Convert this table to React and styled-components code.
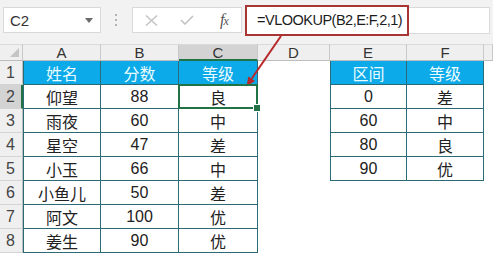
import React from "react";
import styled, { createGlobalStyle } from "styled-components";

const GlobalStyle = createGlobalStyle`
  html, body {
    margin: 0;
    padding: 0;
    background: #ffffff;
    overflow: hidden;
  }
  * {
    box-sizing: border-box;
  }
`;

const FONT = `"Liberation Sans", "Noto Sans CJK SC", sans-serif`;
const TEAL = "#2b6b78";
const EXCEL_GREEN = "#217346";

const Sheet = styled.div`
  position: relative;
  width: 493px;
  height: 255px;
  font-family: ${FONT};
  background: #ffffff;
`;

/* ---------- formula bar ---------- */

const Toolbar = styled.div`
  height: 44px;
  padding: 0 0 4px 3px;
  display: flex;
  align-items: center;
  background: #f2f2f2;
`;

const NameBox = styled.div`
  width: 98px;
  height: 26px;
  display: flex;
  align-items: center;
  justify-content: space-between;
  padding: 0 7px 0 6px;
  background: #fff;
  border: 1px solid #d9d9d9;
  font-size: 15px;
  color: #333;
`;

const Caret = styled.span`
  width: 0;
  height: 0;
  border-left: 4px solid transparent;
  border-right: 4px solid transparent;
  border-top: 5px solid #6a6a6a;
`;

const Grip = styled.div`
  width: 3px;
  margin: 0 14px 0 14px;
  display: flex;
  flex-direction: column;
  gap: 3px;

  span {
    width: 2px;
    height: 2px;
    background: #b3b3b3;
  }
`;

const IconBox = styled.div`
  width: 110px;
  height: 26px;
  display: flex;
  align-items: center;
  padding: 0 12px 0 12px;
  gap: 22px;
  background: #fff;
  border: 1px solid #d9d9d9;
`;

const FxLabel = styled.span`
  margin-left: 4px;
  font-family: "Liberation Serif", serif;
  font-style: italic;
  font-size: 16px;
  color: #555;
  letter-spacing: -1px;

  small {
    font-size: 12px;
  }
`;

const FormulaField = styled.div`
  flex: 1;
  margin-left: 3px;
  margin-right: 3px;
  display: flex;
  align-items: center;
`;

const Highlight = styled.div`
  width: 164px;
  height: 31px;
  display: flex;
  align-items: center;
  padding-left: 10px;
  background: #fff;
  border: 2px solid #a93434;
  font-size: 14.5px;
  letter-spacing: -0.5px;
  color: #1c1c1c;
  white-space: nowrap;
  overflow: hidden;
`;

const FormulaRest = styled.div`
  flex: 1;
  height: 27px;
  background: #fff;
  border: 1px solid #d9d9d9;
  border-left: none;
`;

/* ---------- grid ---------- */

const Grid = styled.div`
  display: grid;
  grid-template-columns: 23px 78px 78px 79px 72px 77px 77px 1fr;
  grid-template-rows: 17px repeat(8, 24px);
`;

const Corner = styled.div`
  position: relative;
  background: #efefef;
  border-top: 1px solid #dadada;
  border-right: 1px solid #c9c9c9;
  border-bottom: 1px solid #bdbdbd;

  &::after {
    content: "";
    position: absolute;
    right: 3px;
    bottom: 3px;
    border-left: 9px solid transparent;
    border-bottom: 9px solid #c4c4c4;
  }
`;

const ColHead = styled.div`
  display: flex;
  align-items: center;
  justify-content: center;
  background: ${(p) => (p.$active ? "#d3d3d3" : "#efefef")};
  border-top: 1px solid #dadada;
  border-right: 1px solid #c9c9c9;
  border-bottom: ${(p) => (p.$active ? `2px solid ${EXCEL_GREEN}` : "1px solid #bdbdbd")};
  font-size: 15px;
  color: #333;
`;

const RowHead = styled.div`
  display: flex;
  align-items: center;
  padding-left: 6px;
  background: ${(p) => (p.$active ? "#d3d3d3" : "#efefef")};
  border-right: ${(p) => (p.$active ? `2px solid ${EXCEL_GREEN}` : "1px solid #bdbdbd")};
  border-bottom: 1px solid #d4d4d4;
  font-size: 16px;
  color: #444;
`;

const Cell = styled.div`
  position: relative;
  display: flex;
  align-items: center;
  justify-content: center;
  font-size: 16px;
  color: #222;
  background: #fff;
  border-right: 1px solid ${TEAL};
  border-bottom: 1px solid ${TEAL};
  border-left: ${(p) => (p.$first ? `1px solid ${TEAL}` : "none")};
`;

const HeadCell = styled(Cell)`
  background: #0caae8;
  color: #eafcff;
`;

const Blank = styled.div`
  background: #fff;
`;

const Picked = styled(Cell)`
  &::before {
    content: "";
    position: absolute;
    inset: -1px -1px -1px -1px;
    border: 2px solid ${EXCEL_GREEN};
    z-index: 1;
  }

  &::after {
    content: "";
    position: absolute;
    right: -4px;
    bottom: -4px;
    width: 6px;
    height: 6px;
    background: ${EXCEL_GREEN};
    border: 1px solid #fff;
    z-index: 2;
  }
`;

const Pointer = styled.svg`
  position: absolute;
  left: 0;
  top: 0;
  pointer-events: none;
`;

const scores = [
  ["仰望", "88", "良"],
  ["雨夜", "60", "中"],
  ["星空", "47", "差"],
  ["小玉", "66", "中"],
  ["小鱼儿", "50", "差"],
  ["阿文", "100", "优"],
  ["姜生", "90", "优"],
];

const bands = [
  ["0", "差"],
  ["60", "中"],
  ["80", "良"],
  ["90", "优"],
];

const letters = ["A", "B", "C", "D", "E", "F", ""];

export default function App() {
  const rows = [];

  // header row of both tables
  rows.push(
    <React.Fragment key="r1">
      <RowHead>1</RowHead>
      <HeadCell $first>姓名</HeadCell>
      <HeadCell>分数</HeadCell>
      <HeadCell>等级</HeadCell>
      <Blank />
      <HeadCell $first>区间</HeadCell>
      <HeadCell>等级</HeadCell>
      <Blank />
    </React.Fragment>
  );

  scores.forEach(([name, score, grade], i) => {
    const band = bands[i];
    const GradeCell = i === 0 ? Picked : Cell;
    rows.push(
      <React.Fragment key={name}>
        <RowHead $active={i === 0}>{i + 2}</RowHead>
        <Cell $first>{name}</Cell>
        <Cell>{score}</Cell>
        <GradeCell>{grade}</GradeCell>
        <Blank />
        {band ? (
          <>
            <Cell $first>{band[0]}</Cell>
            <Cell>{band[1]}</Cell>
          </>
        ) : (
          <>
            <Blank />
            <Blank />
          </>
        )}
        <Blank />
      </React.Fragment>
    );
  });

  return (
    <Sheet>
      <GlobalStyle />
      <Toolbar>
        <NameBox>
          C2
          <Caret />
        </NameBox>
        <Grip>
          <span />
          <span />
          <span />
        </Grip>
        <IconBox>
          <svg width="13" height="11" viewBox="0 0 13 11">
            <path d="M1 0.5 L12 10.5 M12 0.5 L1 10.5" stroke="#c2c2c2" strokeWidth="1.4" />
          </svg>
          <svg width="14" height="10" viewBox="0 0 14 10">
            <path d="M1 5 L5 9 L13 1" stroke="#c2c2c2" strokeWidth="1.6" fill="none" />
          </svg>
          <FxLabel>
            f<small>x</small>
          </FxLabel>
        </IconBox>
        <FormulaField>
          <Highlight>=VLOOKUP(B2,E:F,2,1)</Highlight>
          <FormulaRest />
        </FormulaField>
      </Toolbar>

      <Grid>
        <Corner />
        {letters.map((l, i) => (
          <ColHead key={i} $active={l === "C"}>
            {l}
          </ColHead>
        ))}
        {rows}
      </Grid>

      <Pointer width="493" height="255" viewBox="0 0 493 255">
        <line x1="281" y1="36" x2="251.6" y2="78.8" stroke="#b8282b" strokeWidth="2" />
        <polygon points="246.5,86.5 255,81 248.3,76.5" fill="#b8282b" />
      </Pointer>
    </Sheet>
  );
}
